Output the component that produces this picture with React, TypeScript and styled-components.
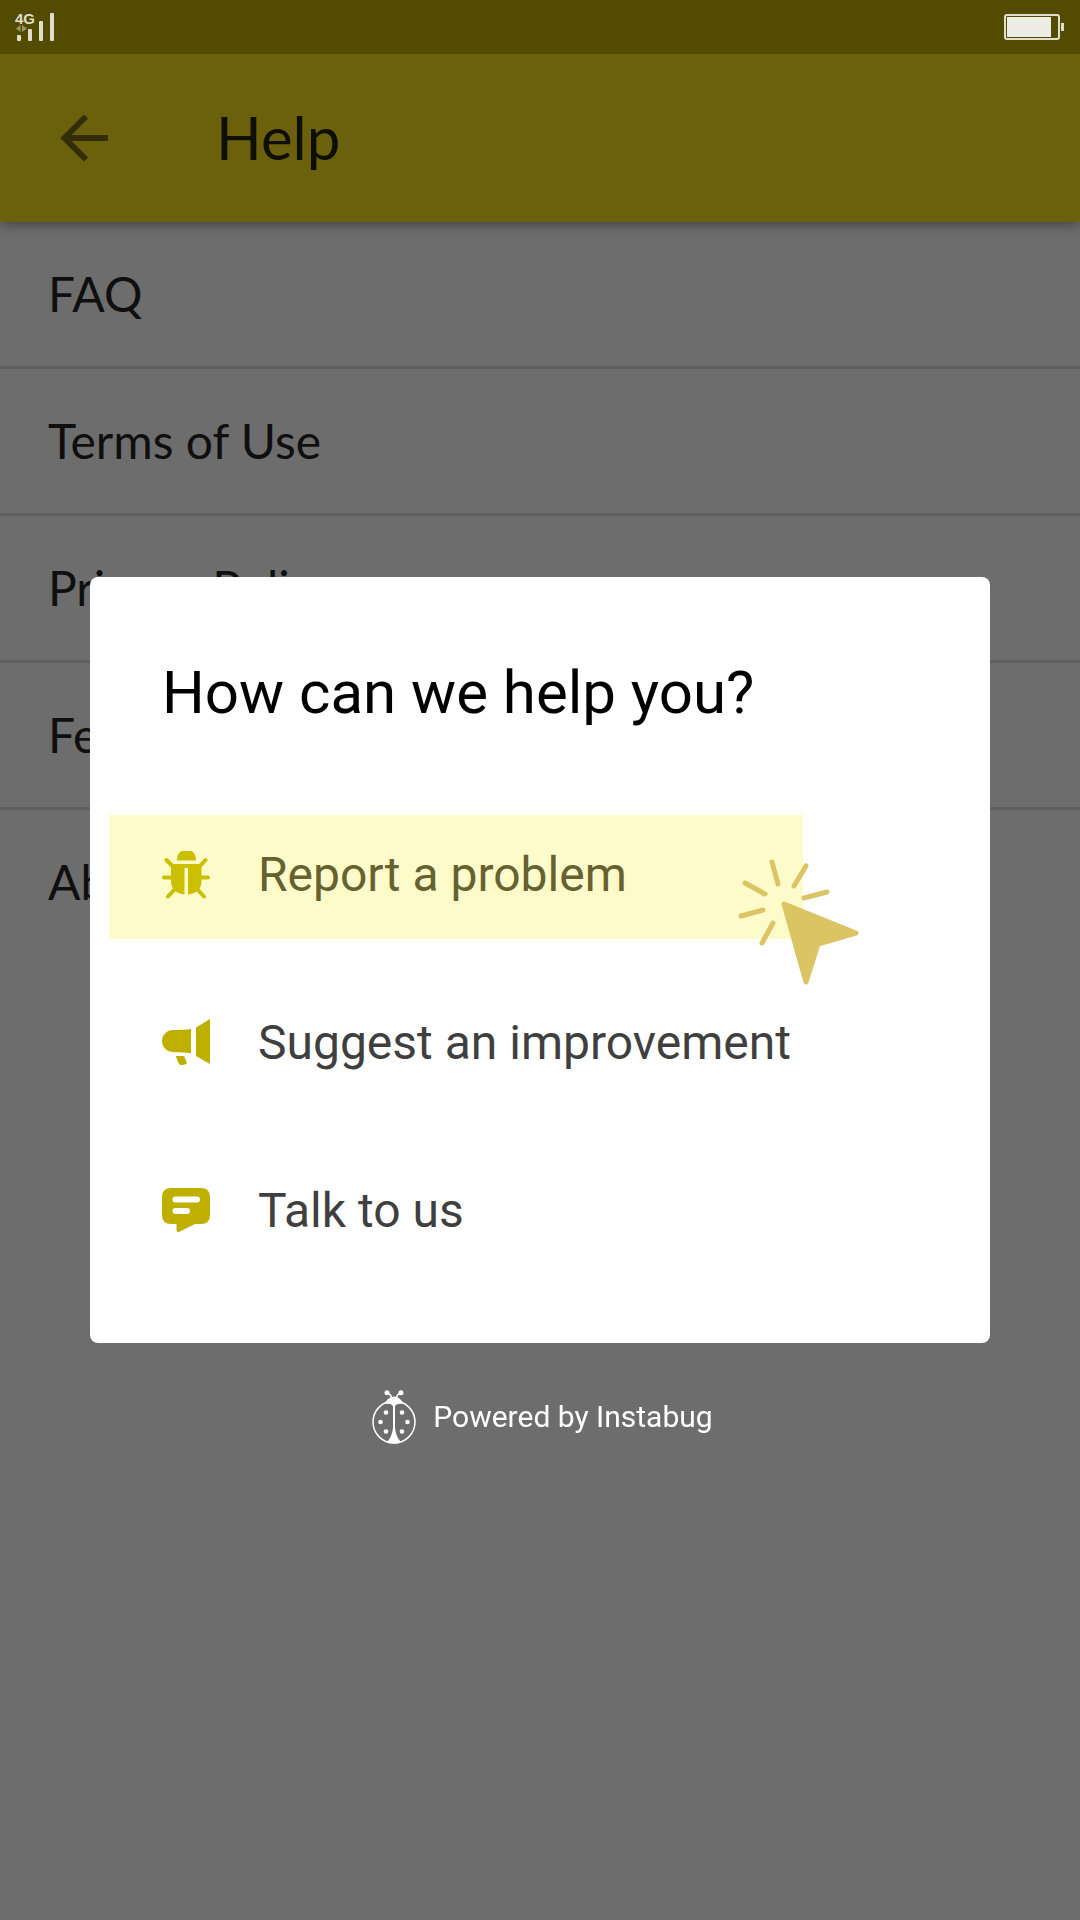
import React from "react";
import styled, { createGlobalStyle } from "styled-components";

const GlobalStyle = createGlobalStyle`
  * { box-sizing: border-box; }
  body {
    margin: 0;
    background: #6d6d6d;
    font-family: Roboto, "Liberation Sans", sans-serif;
  }
  button { font: inherit; border: 0; background: none; padding: 0; cursor: pointer; }
`;

const Screen = styled.div`
  min-height: 100vh;
  background: #6d6d6d;
`;

const StatusBar = styled.div`
  position: relative;
  z-index: 1;
  display: flex;
  align-items: center;
  justify-content: space-between;
  height: 54px;
  padding: 0 16px;
  background: #534b00;
`;

const Signal = styled.div`
  position: relative;
  display: flex;
  height: 28px;
`;

const Network = styled.span`
  position: absolute;
  left: -1px;
  top: -2px;
  color: #dfddcc;
  font: bold 15px/15px "Liberation Sans", Arial, sans-serif;
`;

const Header = styled.header`
  position: relative;
  display: flex;
  align-items: center;
  gap: 106px;
  height: 168px;
  padding: 0 58px;
  background: #6b610c;
  box-shadow: 0 2px 12px rgba(0, 0, 0, 0.45);
`;

const BackButton = styled.button`
  display: flex;
  color: #332d0a;
`;

const Title = styled.h1`
  margin: 0;
  padding-bottom: 2px;
  color: #0f0e02;
  font: 400 60px/72px Lato, sans-serif;
`;

const MenuItem = styled.a`
  display: flex;
  align-items: center;
  height: 147px;
  padding: 0 48px;
  border-bottom: 3px solid #5f5f5f;
  color: #0f0f0f;
  font: 400 48px/58px Lato, sans-serif;
  text-decoration: none;

  &:last-child { border-bottom-color: transparent; }
`;

const Overlay = styled.div`
  position: fixed;
  inset: 0;
  z-index: 2;
  display: grid;
  grid-template-rows: 1fr auto 1fr;
  padding: 0 90px;
`;

const Dialog = styled.section`
  grid-row: 2;
  padding: 80px 19px 68px;
  border-radius: 8px;
  background: #fff;
`;

const DialogTitle = styled.h2`
  margin: 0 0 86px;
  padding-left: 53px;
  color: #000;
  font-weight: 400;
  font-size: 60px;
  line-height: 72px;
`;

const Options = styled.div`
  position: relative;
  display: flex;
  flex-direction: column;
  gap: 44px;
  margin-right: 168px;
`;

const Option = styled.button<{ $active?: boolean }>`
  display: flex;
  align-items: center;
  gap: 48px;
  height: 124px;
  padding: 0 0 4px 53px;
  background: ${(p) => (p.$active ? "#fefbcb" : "transparent")};
  color: ${(p) => (p.$active ? "#65622f" : "#3f3f3f")};
  font-size: 48px;
  line-height: 56px;
  text-align: left;
  white-space: nowrap;

  svg {
    flex: none;
    color: ${(p) => (p.$active ? "#cbbf00" : "#bfb000")};
  }
`;

const Pointer = styled.svg`
  position: absolute;
  right: -57px;
  top: 43px;
  pointer-events: none;
`;

const Powered = styled.footer`
  grid-row: 3;
  display: flex;
  align-items: center;
  align-self: start;
  justify-content: center;
  gap: 17px;
  margin-top: 47px;
  padding-left: 5px;
  color: #fff;
  font-size: 30px;
  line-height: 36px;
`;

const BugIcon = () => (
  <svg width="48" height="48" viewBox="0 1 48 48" fill="currentColor" aria-hidden="true">
    <path d="M15 10.500Q15 0 24.500 0Q34 0 34 10.500Z" />
    <path d="M9 14H39.500V31Q39.500 43 26 44.500V18H22.500V44.500Q9 43 9 31Z" />
    <path
      d="M11 16.500L4.500 10M37.500 16.500L43.500 10M10 27.500H2M38 27.500H46M13 39L6 46.500M35 39L42 46.500"
      stroke="currentColor"
      strokeWidth="4"
      strokeLinecap="round"
    />
  </svg>
);

const MegaphoneIcon = () => (
  <svg width="48" height="48" viewBox="0 0 48 48" fill="currentColor" aria-hidden="true">
    <path d="M48 0V45L34 37V8.500Z" />
    <path d="M29 10V34.500Q22 33 11 33A11 11 0 0 1 11 11Q22 11 29 10Z" />
    <path d="M13.700 37H21.500Q22.500 37 23 39L25 44.500Q21 46.500 18.500 46Q17 45.500 16 43Z" />
  </svg>
);

const ChatIcon = () => (
  <svg width="48" height="48" viewBox="0 1 48 48" aria-hidden="true">
    <path
      d="M9 2H39Q48 2 48 11V29Q48 38 39 38H33L18 45.500Q14.500 47 14.500 44V38H9Q0 38 0 29V11Q0 2 9 2Z"
      fill="currentColor"
    />
    <path d="M13.500 13.500H35M13.500 25H25" stroke="#fff" strokeWidth="6" strokeLinecap="round" />
  </svg>
);

const Ladybug = () => (
  <svg width="44" height="54" viewBox="0 0 44 54" fill="#fff" aria-hidden="true">
    <circle cx="22" cy="32" r="21" fill="none" stroke="#fff" strokeWidth="1.500" />
    <path d="M13 14Q15 7 22 6.500Q29 7 31 14Q25 13 23 16V38Q24 47 29 52Q22 55 15 52Q20 47 21 38V16Q19 13 13 14Z" />
    <path d="M15 3Q19 4 19.500 8M29 3Q25 4 24.500 8" fill="none" stroke="#fff" strokeWidth="1.500" />
    <circle cx="15" cy="2.700" r="2.500" />
    <circle cx="29" cy="2.700" r="2.500" />
    {[[14, 22.500], [30, 22.500], [8.500, 32], [35.500, 32], [14, 41.500], [30, 41.500]].map(([x, y]) => (
      <circle key={`${x}-${y}`} cx={x} cy={y} r="2.300" />
    ))}
  </svg>
);

export default function App() {
  return (
    <Screen>
      <GlobalStyle />
      <StatusBar>
        <Signal>
          <Network>4G</Network>
          <svg width="40" height="28" viewBox="0 0 40 28" fill="#dfddcc" aria-hidden="true">
            <rect x="1" y="22" width="4" height="6" rx="1" />
            <rect x="12" y="16" width="4" height="12" rx="1" />
            <rect x="23" y="8" width="4" height="20" rx="1" />
            <rect x="34" width="4" height="28" rx="1" />
            <path d="M0 15.500L4.500 12V19ZM11 15.500L6 12V19Z" fill="#9c9868" />
          </svg>
        </Signal>
        <svg width="60" height="26" viewBox="0 0 60 26" role="img" aria-label="Battery">
          <rect x="1" y="1" width="54" height="24" rx="2" fill="none" stroke="#dfddcc" strokeWidth="2" />
          <rect x="3" y="3" width="44" height="20" fill="#eeede5" />
          <rect x="57" y="9" width="3" height="8" fill="#dfddcc" />
        </svg>
      </StatusBar>
      <Header>
        <BackButton aria-label="Back">
          <svg width="52" height="52" viewBox="0 0 52 52" fill="none" stroke="currentColor" strokeWidth="6" aria-hidden="true">
            <path d="M50 26H7M28 4.500L6.500 26L28 47.500" />
          </svg>
        </BackButton>
        <Title>Help</Title>
      </Header>
      <nav>
        {["FAQ", "Terms of Use", "Privacy Policy", "Feedback", "About"].map((label) => (
          <MenuItem key={label} href="#">{label}</MenuItem>
        ))}
      </nav>
      <Overlay>
        <Dialog role="dialog" aria-labelledby="dialog-title">
          <DialogTitle id="dialog-title">How can we help you?</DialogTitle>
          <Options>
            <Option $active><BugIcon />Report a problem</Option>
            <Option><MegaphoneIcon />Suggest an improvement</Option>
            <Option><ChatIcon />Talk to us</Option>
            <Pointer width="122" height="128" viewBox="0 0 122 128" aria-hidden="true">
              <path
                d="M46 46L118 75L80 86L68 124Z"
                fill="#dbc464"
                stroke="#dbc464"
                strokeWidth="5"
                strokeLinejoin="round"
              />
              <path
                d="M34 4L40 26M68 8L56 28M89 34L66 40M7 25L27 36M3 58L25 52M24 85L35 65"
                stroke="#dbc464"
                strokeWidth="5"
                strokeLinecap="round"
              />
            </Pointer>
          </Options>
        </Dialog>
        <Powered><Ladybug />Powered by Instabug</Powered>
      </Overlay>
    </Screen>
  );
}
